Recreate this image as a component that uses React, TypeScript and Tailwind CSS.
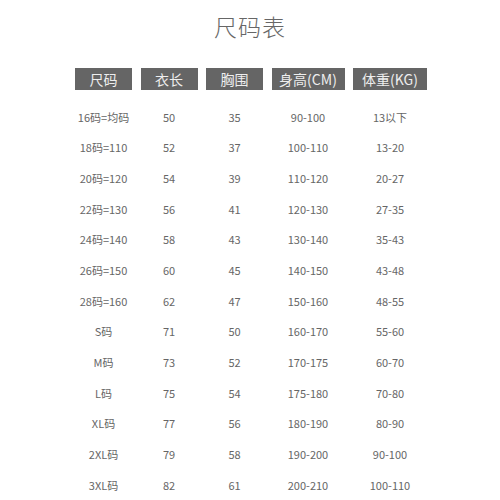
const headers = ['尺码', '衣长', '胸围', '身高(CM)', '体重(KG)'];

const rows: string[][] = [
  ['16码=均码', '50', '35', '90-100', '13以下'],
  ['18码=110', '52', '37', '100-110', '13-20'],
  ['20码=120', '54', '39', '110-120', '20-27'],
  ['22码=130', '56', '41', '120-130', '27-35'],
  ['24码=140', '58', '43', '130-140', '35-43'],
  ['26码=150', '60', '45', '140-150', '43-48'],
  ['28码=160', '62', '47', '150-160', '48-55'],
  ['S码', '71', '50', '160-170', '55-60'],
  ['M码', '73', '52', '170-175', '60-70'],
  ['L码', '75', '54', '175-180', '70-80'],
  ['XL码', '77', '56', '180-190', '80-90'],
  ['2XL码', '79', '58', '190-200', '90-100'],
  ['3XL码', '82', '61', '200-210', '100-110'],
];

export default function App() {
  return (
    <div
      className="w-[500px] h-[500px] overflow-hidden bg-white"
      style={{ fontFamily: '"Noto Sans CJK SC", "Noto Sans", sans-serif' }}
    >
      <h1 className="pt-[11px] text-center text-[23px] leading-[30px] font-light text-[#666] tracking-[1px]">
        尺码表
      </h1>

      <div className="mt-[27px] ml-[75px] grid grid-cols-[57px_57px_57px_73px_74px] gap-x-[8.5px]">
        {headers.map((h) => (
          <div
            key={h}
            className="h-[22px] bg-[#656565] text-[#eeeeee] text-[14px] leading-[22px] text-center"
          >
            {h}
          </div>
        ))}
      </div>

      <div className="mt-[11.5px] ml-[75px] grid grid-cols-[57px_57px_57px_73px_74px] gap-x-[8.5px]">
        {rows.map((r) =>
          r.map((c, i) => (
            <div
              key={r[0] + i}
              className="h-[30.7px] leading-[30.7px] text-center text-[11px] text-[#666] whitespace-nowrap"
            >
              {c}
            </div>
          ))
        )}
      </div>
    </div>
  );
}
